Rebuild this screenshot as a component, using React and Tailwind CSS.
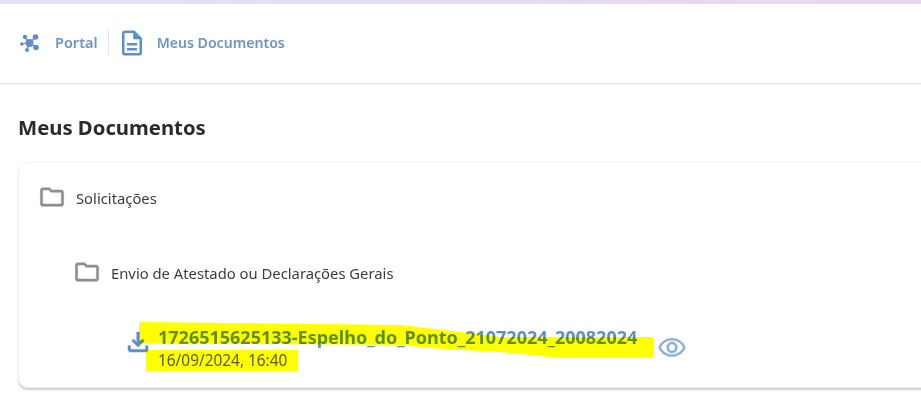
const font = "font-['Noto_Sans','Open_Sans',sans-serif]";

const Mui = ({ d, className, bold }) => (
  <svg viewBox="0 0 24 24" fill="currentColor" stroke={bold ? "currentColor" : "none"} strokeWidth={bold ? 0.4 : 0} className={className}>
    <path d={d} />
  </svg>
);

const FOLDER = "M9.17 6l2 2H20v10H4V6h5.17M10 4H4c-1.1 0-1.99.9-1.99 2L2 18c0 1.1.9 2 2 2h16c1.1 0 2-.9 2-2V8c0-1.1-.9-2-2-2h-8l-2-2z";
const FILE = "M8 16h8v2H8zm0-4h8v2H8zm6-10H6c-1.1 0-2 .9-2 2v16c0 1.1.89 2 1.99 2H18c1.1 0 2-.9 2-2V8l-6-6zm4 18H6V4h7v5h5v11z";
const DOWNLOAD = "M18 15v3H6v-3H4v3c0 1.1.9 2 2 2h12c1.1 0 2-.9 2-2v-3h-2zm-1-4l-1.41-1.41L13 12.17V4h-2v8.17L8.41 9.59 7 11l5 5 5-5z";
const EYE = "M12 6c3.79 0 7.17 2.13 8.82 5.5C19.17 14.87 15.79 17 12 17s-7.17-2.13-8.82-5.5C4.83 8.13 8.21 6 12 6m0-2C7 4 2.73 7.11 1 11.5 2.73 15.89 7 19 12 19s9.27-3.11 11-7.5C21.27 7.11 17 4 12 4zm0 5c1.38 0 2.5 1.12 2.5 2.5S13.38 14 12 14s-2.5-1.12-2.5-2.5S10.62 9 12 9m0-2c-2.48 0-4.5 2.02-4.5 4.5S9.52 16 12 16s4.5-2.02 4.5-4.5S14.48 7 12 7z";

const HubIcon = () => (
  <svg viewBox="0 0 20 20" className="w-5 h-5 text-[#5b8fcf]" fill="currentColor" stroke="currentColor">
    <g strokeWidth="1.2">
      <line x1="9" y1="10" x2="5" y2="4" />
      <line x1="9" y1="10" x2="16" y2="4" />
      <line x1="9" y1="10" x2="1" y2="11" />
      <line x1="9" y1="10" x2="16" y2="14" />
      <line x1="9" y1="10" x2="7" y2="17" />
    </g>
    <g stroke="none">
      <circle cx="9.5" cy="10" r="4" />
      <circle cx="5" cy="4" r="2.2" />
      <circle cx="15.5" cy="4" r="2.8" />
      <circle cx="1.8" cy="11" r="1.8" />
      <circle cx="16" cy="14.5" r="2.8" />
      <circle cx="7" cy="17" r="2" />
    </g>
  </svg>
);

const FolderRow = ({ label, className }) => (
  <div className={`flex items-center gap-[10px] ${className}`}>
    <Mui d={FOLDER} bold className="w-7 h-7 text-[#8f8f8f] -mt-[2px]" />
    <span className="text-[14.8px] leading-[20px] text-[#3d3d3d]">{label}</span>
  </div>
);

export default function App() {
  return (
    <div className={`relative w-[921px] h-[403px] overflow-hidden bg-white ${font}`}>
      <div className="h-1 bg-gradient-to-r from-[#e3e3f6] to-[#e8d5ef]" />

      <header className="h-[80px] flex items-center pl-5 pb-[2px] border-b border-[#e0e0e0]">
        <HubIcon />
        <span className="ml-[15px] text-[14.5px] font-semibold text-[#6d94c9]">Portal</span>
        <div className="ml-[10px] w-px h-[25px] bg-[#e2e2e2]" />
        <Mui d={FILE} className="ml-[8px] w-[30px] h-[30px] text-[#5b8fcf]" />
        <span className="ml-[10px] text-[14.1px] font-semibold text-[#6d94c9]">Meus Documentos</span>
      </header>

      <main className="pl-[18px] pt-[28px]">
        <h1 className="text-[20.3px] leading-[30px] font-bold text-[#2a2a2a]">Meus Documentos</h1>

        <section className="mt-[20px] w-[960px] h-[226px] rounded-[10px] bg-white border border-[#f3f3f3] shadow-[0_2px_2px_rgba(0,0,0,0.2)] pl-[19px] pt-[22px]">
          <FolderRow label="Solicitações" />
          <FolderRow label="Envio de Atestado ou Declarações Gerais" className="ml-[35px] mt-[49px]" />

          <div className="ml-[85px] mt-[39px] flex items-center">
            <Mui d={DOWNLOAD} bold className="w-[30px] h-[30px] text-[#5b8fcf] -mt-[13px]" />
            <div className="ml-[5px]">
              <div className="text-[18px] leading-[24px] font-bold text-[#5f8fc9]">1726515625133-Espelho_do_Ponto_21072024_20082024</div>
              <div className="mt-[2px] text-[15.4px] leading-[20px] text-[#5a5a5a]">16/09/2024, 16:40</div>
            </div>
            <Mui d={EYE} className="ml-[20px] -mt-px w-[30px] h-[30px] text-[#8fb2dc]" />
          </div>
        </section>
      </main>

      {/* marca-texto amarelo por cima do arquivo */}
      <svg viewBox="0 0 921 403" className="absolute inset-0 w-[921px] h-[403px] mix-blend-multiply pointer-events-none">
        <polygon fill="#ffff00" points="139,322 400,325 443,330 500,337 653,337 653,358 560,358 500,352 443,349 400,345 148,343 139,343" />
        <polygon fill="#ffff00" points="146,350 298,350 298,371 146,371" />
      </svg>
    </div>
  );
}
